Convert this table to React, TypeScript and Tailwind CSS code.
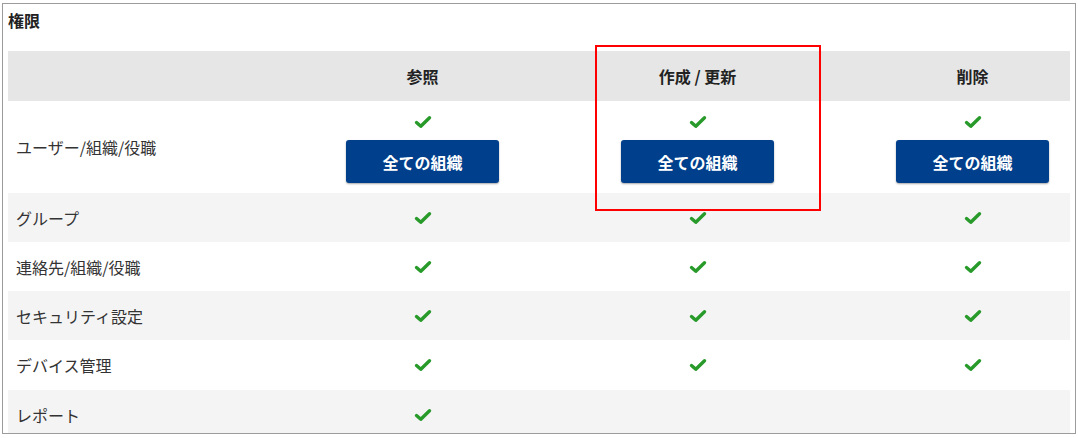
import React from 'react';

type Perm = { label: string; read: boolean; write: boolean; del: boolean; scope?: boolean; h: string };

const rows: Perm[] = [
    { label: 'ユーザー/組織/役職', read: true, write: true, del: true, scope: true, h: 'h-[92px]' },
    { label: 'グループ', read: true, write: true, del: true, h: 'h-[49px]' },
    { label: '連絡先/組織/役職', read: true, write: true, del: true, h: 'h-[49px]' },
    { label: 'セキュリティ設定', read: true, write: true, del: true, h: 'h-[49px]' },
    { label: 'デバイス管理', read: true, write: true, del: true, h: 'h-[50px]' },
    { label: 'レポート', read: true, write: false, del: false, h: 'h-[50px]' },
];

const font = { fontFamily: '"Noto Sans CJK JP", "Noto Sans", sans-serif' };

function Check() {
    return (
        <svg width="18" height="14" viewBox="0 0 18 14" className="block">
            <path d="M2.5 7.5 L6.8 11.2 L15.5 2.8" fill="none" stroke="#279a2a" strokeWidth="3.4" strokeLinecap="round" strokeLinejoin="round" />
        </svg>
    );
}

function ScopeButton() {
    return (
        <button className="w-[153px] h-[43px] rounded-[3px] bg-[#003f8c] text-white text-[16px] font-bold shadow-[0_1px_2px_rgba(0,0,0,0.35)]">
            全ての組織
        </button>
    );
}

function Cell({ on, scope }: { on: boolean; scope?: boolean }) {
    if (scope) {
        return (
            <div className="flex flex-col items-center pt-[14px] gap-[11px]">
                {on && <Check />}
                <ScopeButton />
            </div>
        );
    }
    return <div className="flex items-center justify-center">{on && <Check />}</div>;
}

export default function App() {
    return (
        <div className="relative w-[1078px] h-[438px] bg-white text-[#333]" style={font}>
            <div className="ml-[2px] mt-[3px] w-[1074px] h-[431px] border border-[#9c9c9c] overflow-hidden px-[5px]">
                {/* Title */}
                <div className="pt-[6px] mb-[20px] leading-[21px] text-[16px] font-bold text-[#222]">権限</div>

                {/* Header */}
                <div className="grid grid-cols-[277px_275px_275px_275px] h-[50px] bg-[#e6e6e6] text-[16px] font-bold text-[#222]">
                    <div />
                    <div className="flex items-center justify-center">参照</div>
                    <div className="flex items-center justify-center">作成 / 更新</div>
                    <div className="flex items-center justify-center">削除</div>
                </div>

                {/* Rows */}
                {rows.map((r, i) => (
                    <div
                        key={r.label}
                        className={`grid grid-cols-[277px_275px_275px_275px] text-[16px] ${r.h} ${i % 2 === 1 ? 'bg-[#f4f4f4]' : 'bg-white'}`}
                    >
                        <div className="flex items-center pl-[8px]">{r.label}</div>
                        <Cell on={r.read} scope={r.scope} />
                        <Cell on={r.write} scope={r.scope} />
                        <Cell on={r.del} scope={r.scope} />
                    </div>
                ))}
            </div>

            {/* Highlight annotation */}
            <div className="absolute left-[595px] top-[42px] w-[226px] h-[166px] border-2 border-[#f00] pointer-events-none" />
        </div>
    );
}
